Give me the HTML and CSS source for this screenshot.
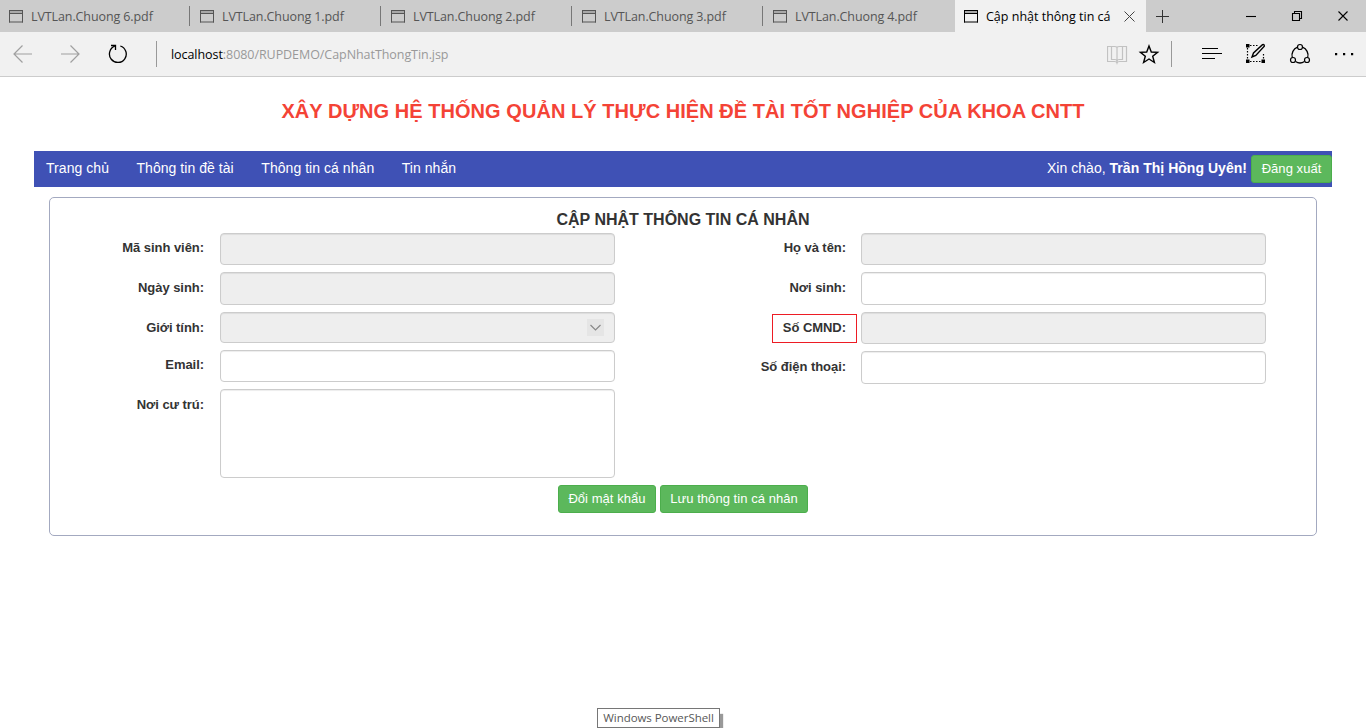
FILE: index.html
```html
<!DOCTYPE html>
<html lang="vi">
<head>
<meta charset="utf-8">
<title>Cập nhật thông tin cá nhân</title>
<link rel="stylesheet" href="styles.css">
</head>
<body>
<svg class="defs" width="0" height="0"><symbol id="win" viewBox="0 0 14 13"><path d="M0 .5H14M0 3.5H14M0 12H14M.5 0V12.5M13.5 0V12.5" fill="none" stroke="currentColor"/><path d="M1 1h12v2H1z" fill="currentColor" opacity=".3"/></symbol></svg>
<header class="tabs">
  <div class="tab first"><svg class="win"><use href="#win"/></svg><span>LVTLan.Chuong 6.pdf</span></div>
  <div class="tab"><svg class="win"><use href="#win"/></svg><span>LVTLan.Chuong 1.pdf</span></div>
  <div class="tab"><svg class="win"><use href="#win"/></svg><span>LVTLan.Chuong 2.pdf</span></div>
  <div class="tab"><svg class="win"><use href="#win"/></svg><span>LVTLan.Chuong 3.pdf</span></div>
  <div class="tab last"><svg class="win"><use href="#win"/></svg><span>LVTLan.Chuong 4.pdf</span></div>
  <div class="tab active"><svg class="win"><use href="#win"/></svg><span>Cập nhật thông tin cá</span>
    <svg class="close" width="11" height="11" viewBox="0 0 11 11"><path d="M.5.5l10 10M10.500.5l-10 10" fill="none" stroke="#444"/></svg></div>
  <svg class="plus" width="13" height="13" viewBox="0 0 13 13"><path d="M6.500 0v13M0 6.500h13" stroke="#333"/></svg>
  <svg class="wctl" width="100" height="12" viewBox="0 0 100 12"><g fill="none" stroke="#000" stroke-width="1.100"><path d="M0 6.500h10"/><path d="M46.500 3.500h7v7h-7zM48.500 3.500v-2h7v7h-2"/><path d="M92.500 1.500l9 9M101.500 1.500l-9 9"/></g></svg>
</header>
<div class="toolbar">
  <svg class="nav" width="67" height="20" viewBox="0 0 67 20"><g fill="none" stroke="#a0a0a0" stroke-width="1.200"><path d="M.5 10H19M9.500 1.500L1 10l8.500 8.500"/><path d="M48 10H66.500M57.500 1.500L66 10l-8.500 8.500"/></g></svg>
  <svg class="reload" width="20" height="20" viewBox="0 0 20 20"><path d="M12.300 2A8.400 8.400 0 1 1 6.800 2.200" fill="none" stroke="#000" stroke-width="1.300"/><path d="M3 1.500h4.500v4.500" fill="none" stroke="#000" stroke-width="1.300"/></svg>
  <i class="bar"></i>
  <span class="url"><b>localhost</b>:8080/RUPDEMO/CapNhatThongTin.jsp</span>
  <svg class="tools" width="248" height="28" viewBox="1107 40 248 28"><g fill="none" stroke="#000" stroke-width="1.200">
    <path d="M1107.500 46.500h7q2 0 2.500 1 .5-1 2.500-1h7v15h-7q-2 0-2.500 1.500-.5-1.500-2.500-1.500h-7zM1117 47v16M1111.500 47v12.500h3.500q1.500 0 2 1.500 .5-1.500 2-1.500h3.500V47" stroke="#c2c2c2"/>
    <path d="M1149 46l2.300 6 6.300.3-4.900 4 1.700 6.200-5.400-3.500-5.400 3.500 1.700-6.200-4.900-4 6.300-.3z" stroke-width="1.400"/>
    <path d="M1171.500 41v26" stroke="#999" stroke-width="1"/>
    <path d="M1202 48.500h16M1202 53.500h20M1202 58.500h13"/>
    <path d="M1250 45.500h9M1247.500 48v12M1263.500 54v6M1250 61.500h12" stroke-dasharray="1.500 1.500"/>
    <path d="M1252 57l1.500-4 9-8.300q2-.7 1.800 1.500l-8.500 9.300z" stroke-width="1.400"/>
    <path d="M1292.300 57.500a8.500 8.500 0 0 1 5.200-10.300M1302.500 47.200a8.500 8.500 0 0 1 5.200 10.300M1295.500 61.500q4.500 3 9 0" stroke-width="1.300"/>
    <circle cx="1300" cy="47" r="2.500"/><circle cx="1293" cy="60" r="2.500"/><circle cx="1307" cy="60" r="2.500"/></g>
    <path d="M1246 44h3.500v3.500h-3.500zM1246 59.500h3.500v3.500h-3.500zM1261.500 59.500h3.500v3.500h-3.500z"/>
    <path d="M1335 53h2.200v2.200h-2.200zM1343 53h2.200v2.200h-2.200zM1351 53h2.200v2.200h-2.200z"/>
  </svg>
</div>
<main class="page">
  <h1>XÂY DỰNG HỆ THỐNG QUẢN LÝ THỰC HIỆN ĐỀ TÀI TỐT NGHIỆP CỦA KHOA CNTT</h1>
  <nav class="menu">
    <a>Trang chủ</a><a>Thông tin đề tài</a><a>Thông tin cá nhân</a><a>Tin nhắn</a>
    <span class="hello">Xin chào, <b>Trần Thị Hồng Uyên!</b></span><button class="btn logout">Đăng xuất</button>
  </nav>
  <section class="panel">
    <h2>CẬP NHẬT THÔNG TIN CÁ NHÂN</h2>
    <div class="cols">
      <div class="col left">
        <div class="row"><label>Mã sinh viên:</label><div class="field off h32"></div></div>
        <div class="row"><label class="low">Ngày sinh:</label><div class="field off h33"></div></div>
        <div class="row"><label class="low">Giới tính:</label><div class="field off h31"><svg class="arrow" viewBox="0 0 17 17"><path d="M3.500 6l5 5 5-5" fill="none" stroke="#888" stroke-width="1.200"/></svg></div></div>
        <div class="row"><label>Email:</label><div class="field h32"></div></div>
        <div class="row"><label class="low">Nơi cư trú:</label><div class="field h89"></div></div>
      </div>
      <div class="col right">
        <div class="row"><label>Họ và tên:</label><div class="field off h32"></div></div>
        <div class="row"><label class="low">Nơi sinh:</label><div class="field h33"></div></div>
        <div class="row"><label class="low marked">Số CMND:</label><div class="field off h32"></div></div>
        <div class="row"><label class="low">Số điện thoại:</label><div class="field h33"></div></div>
      </div>
    </div>
    <div class="actions"><button class="btn pass">Đổi mật khẩu</button><button class="btn save">Lưu thông tin cá nhân</button></div>
  </section>
</main>
<div class="tip">Windows PowerShell</div>
</body>
</html>
```

FILE: styles.css
```css
*, *::before, *::after { box-sizing: border-box; }
body { margin: 0; height: 728px; overflow: hidden; position: relative; background: #fff; color: #333; font: 13px "Liberation Sans", Arial, sans-serif; }
.defs { position: absolute; }
.tabs { display: flex; height: 32px; background: #ccc; font: 12.500px "Open Sans", sans-serif; color: #555; }
.tab { position: relative; display: flex; align-items: center; width: 191px; padding-left: 10px; white-space: nowrap; letter-spacing: -.1px; }
.tab::after { content: ""; position: absolute; right: 0; top: 6px; height: 20px; width: 1px; background: #777; }
.tab.last::after, .tab.active::after { display: none; }
.tab.first { width: 190px; padding-left: 9px; }
.tab.last { width: 192px; }
.tab.active { background: #f1f1f1; color: #000; padding-left: 9px; letter-spacing: 0; }
.win { width: 14px; height: 13px; margin-right: 8px; flex: none; }
.close { margin-left: auto; margin-right: 11px; }
.plus { margin: 10px 0 0 10px; }
.wctl { margin: 10px 0 0 77px; overflow: visible; }
.toolbar { display: flex; height: 45px; background: #f1f1f1; border-bottom: 1px solid #ccc; align-items: center; }
.nav { margin-left: 13px; flex: none; }
.reload { margin-left: 28px; }
.bar { width: 1px; height: 26px; background: #999; margin-left: 28px; }
.url { margin-left: 14px; width: 936px; font: 12.500px "Open Sans", sans-serif; letter-spacing: -.06px; color: #999; white-space: nowrap; }
.url b { color: #000; font-weight: 400; }
.tools { flex: none; }
.page { padding: 0 34px; }
h1 { margin: 0; height: 74px; padding-top: 21px; text-align: center; font-size: 20px; line-height: 26px; letter-spacing: .05px; color: #f44336; white-space: nowrap; }
.menu { height: 36px; background: #3f51b5; color: #fff; display: flex; align-items: center; padding-left: 12px; font-size: 14px; white-space: nowrap; }
.menu a { margin-right: 27.500px; line-height: 16px; margin-top: -2px; letter-spacing: .05px; }
.hello { margin: -2px 4px 0 auto; letter-spacing: .03px; }
.btn { height: 28px; padding: 0 0 2px; border: 1px solid #4cae4c; border-radius: 3px; background: #5cb85c; color: #fff; font: 13px "Liberation Sans", Arial, sans-serif; letter-spacing: .05px; white-space: nowrap; }
.logout { width: 81px; }
.panel { margin: 10px 15px 0; height: 339px; border: 1px solid #a3a9c0; border-radius: 5px; }
h2 { margin: 0; height: 35px; padding-top: 12px; font-size: 16px; line-height: 20px; text-align: center; white-space: nowrap; }
.cols { display: flex; height: 252px; }
.col { display: flex; flex-direction: column; gap: 7px; }
.left { width: 565px; }
.right { width: 651px; }
.row { display: flex; }
label { position: relative; flex: 1; text-align: right; padding: 7px 16px 0 0; height: 22px; line-height: 15px; font-weight: 700; letter-spacing: -.05px; }
.right label { padding-right: 15px; }
.low { padding-top: 8px; }
.field { width: 395px; border: 1px solid #ccc; border-radius: 4px; background: #fff; box-shadow: inset 0 1px 1px rgba(0,0,0,.075); display: flex; align-items: center; justify-content: flex-end; padding-right: 10px; }
.right .field { width: 405px; }
.off { background: #eee; }
.h31 { height: 31px; }
.h32 { height: 32px; }
.h33 { height: 33px; }
.h89 { height: 89px; }
.arrow { width: 17px; height: 17px; background: #e5e5e5; }
.marked::after { content: ""; position: absolute; right: 4px; top: 2px; width: 85px; height: 29px; border: 1px solid #ed1c24; }
.actions { display: flex; justify-content: center; gap: 4px; }
.pass { width: 98px; }
.save { width: 148px; }
.tip { position: absolute; left: 597px; top: 708px; width: 123px; height: 20px; border: 1px solid #767676; background: #fff; color: #575757; font: 11.500px/18px "Open Sans", sans-serif; letter-spacing: -.05px; text-align: center; box-shadow: 3px 6px 1px #999; white-space: nowrap; }
```
